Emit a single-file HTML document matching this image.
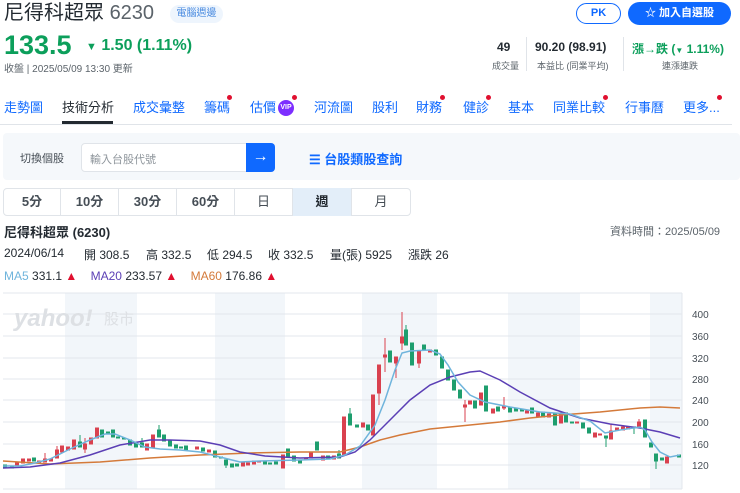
<!DOCTYPE html>
<html><head><meta charset="utf-8"><style>
*{margin:0;padding:0;box-sizing:border-box}
body{width:740px;height:493px;overflow:hidden;background:#fff;font-family:"Liberation Sans","Noto Sans CJK TC",sans-serif;color:#232a31;position:relative}
.a{position:absolute;white-space:nowrap}
.tab{position:absolute;top:99px;font-size:13px;color:#0f69ff;line-height:18px}
.dot{position:absolute;width:5px;height:5px;border-radius:50%;background:#e0102f}
.pb{position:absolute;top:188px;height:28px;border-right:1px solid #e0e4e9;font-size:13px;font-weight:bold;color:#464e56;text-align:center;line-height:28px}
.inf{position:absolute;top:246px;font-size:12px;white-space:nowrap}
</style></head><body>
<div class="a" style="left:4px;top:1px;font-size:20px;line-height:24px;color:#232a31">尼得科超眾 <span style="color:#5b636a">6230</span></div>
<div class="a" style="left:170px;top:5px;height:18px;width:53px;border-radius:9px;background:#eef5fd;color:#4a8be0;font-size:10px;line-height:18px;text-align:center">電腦週邊</div>
<div class="a" style="left:4px;top:29px;font-size:27px;font-weight:bold;color:#0c9f5b;line-height:32px">133.5</div>
<div class="a" style="left:86px;top:37px;font-size:16px;font-weight:bold;color:#0c9f5b;line-height:18px"><span style="font-size:11px">▼</span> 1.50 (1.11%)</div>
<div class="a" style="left:4px;top:60px;font-size:10px;color:#5b636a">收盤 | 2025/05/09 13:30 更新</div>

<div class="a" style="left:576px;top:3px;width:45px;height:21px;border:1.5px solid #0f69ff;border-radius:11px;color:#0f69ff;font-size:11px;font-weight:bold;text-align:center;line-height:18px">PK</div>
<div class="a" style="left:628px;top:2px;width:103px;height:23px;background:#0f69ff;border-radius:12px;color:#fff;font-size:11px;font-weight:bold;text-align:center;line-height:23px">☆ 加入自選股</div>

<div class="a" style="left:497px;top:40px;font-size:12px;font-weight:bold">49</div>
<div class="a" style="left:492px;top:59px;font-size:9px;color:#5b636a">成交量</div>
<div class="a" style="left:526px;top:37px;width:1px;height:34px;background:#e0e4e9"></div>
<div class="a" style="left:535px;top:40px;font-size:12px;font-weight:bold">90.20 (98.91)</div>
<div class="a" style="left:537px;top:59px;font-size:9px;color:#5b636a">本益比 (同業平均)</div>
<div class="a" style="left:623px;top:37px;width:1px;height:34px;background:#e0e4e9"></div>
<div class="a" style="left:632px;top:40px;font-size:12px;font-weight:bold;color:#0c9f5b">漲→跌 (<span style="font-size:8px">▼</span> 1.11%)</div>
<div class="a" style="left:662px;top:59px;font-size:9px;color:#5b636a">連漲連跌</div>

<div class="tab" style="left:4px">走勢圖</div>
<div class="tab" style="left:62px;color:#232a31">技術分析</div>
<div class="a" style="left:62px;top:121px;width:51px;height:3px;background:#232a31"></div>
<div class="tab" style="left:133px">成交彙整</div>
<div class="tab" style="left:204px">籌碼</div><div class="dot" style="left:227px;top:95px"></div>
<div class="tab" style="left:250px">估價</div>
<div class="a" style="left:278px;top:100px;width:16px;height:16px;border-radius:50%;background:#7d2eff;color:#fff;font-size:7px;font-weight:bold;text-align:center;line-height:16px">VIP</div><div class="dot" style="left:292px;top:95px"></div>
<div class="tab" style="left:314px">河流圖</div>
<div class="tab" style="left:372px">股利</div>
<div class="tab" style="left:416px">財務</div><div class="dot" style="left:440px;top:95px"></div>
<div class="tab" style="left:463px">健診</div><div class="dot" style="left:486px;top:95px"></div>
<div class="tab" style="left:508px">基本</div>
<div class="tab" style="left:553px">同業比較</div><div class="dot" style="left:603px;top:95px"></div>
<div class="tab" style="left:625px">行事曆</div>
<div class="tab" style="left:683px">更多...</div><div class="dot" style="left:717px;top:95px"></div>
<div class="a" style="left:0;top:124px;width:732px;height:1px;background:#e0e4e9"></div>

<div class="a" style="left:3px;top:133px;width:737px;height:47px;background:#f5f8fb;border-radius:4px"></div>
<div class="a" style="left:20px;top:150px;font-size:11px;color:#464e56">切換個股</div>
<div class="a" style="left:81px;top:143px;width:194px;height:29px;background:#fff;border:1px solid #e0e4e9;border-radius:4px"></div>
<div class="a" style="left:90px;top:151px;font-size:11px;color:#8f969c">輸入台股代號</div>
<div class="a" style="left:246px;top:143px;width:29px;height:29px;background:#0f69ff;border-radius:0 4px 4px 0;color:#fff;font-size:16px;text-align:center;line-height:28px">→</div>
<div class="a" style="left:309px;top:149px;font-size:13px;color:#0f69ff;font-weight:bold">☰ 台股類股查詢</div>

<div class="a" style="left:3px;top:188px;width:408px;height:28px;border:1px solid #e0e4e9;border-radius:4px"></div>
<div class="pb" style="left:4px;width:57px">5分</div>
<div class="pb" style="left:61px;width:58px">10分</div>
<div class="pb" style="left:119px;width:58px">30分</div>
<div class="pb" style="left:177px;width:58px">60分</div>
<div class="pb" style="left:235px;width:58px;font-weight:normal">日</div>
<div class="pb" style="left:293px;width:59px;background:#e3eef9;color:#232a31">週</div>
<div class="pb" style="left:352px;width:58px;border:none;font-weight:normal">月</div>

<div class="a" style="left:4px;top:222px;font-size:13px;font-weight:bold">尼得科超眾 (6230)</div>
<div class="a" style="left:610px;top:223px;font-size:11px;color:#5b636a">資料時間：2025/05/09</div>
<div class="inf" style="left:4px">2024/06/14</div>
<div class="inf" style="left:84px">開 308.5</div>
<div class="inf" style="left:146px">高 332.5</div>
<div class="inf" style="left:207px">低 294.5</div>
<div class="inf" style="left:268px">收 332.5</div>
<div class="inf" style="left:330px">量(張) 5925</div>
<div class="inf" style="left:408px">漲跌 26</div>
<div class="a" style="left:4px;top:269px;font-size:12px"><span style="color:#6fb4dc">MA5</span> 331.1 <span style="color:#e0102f">▲</span> &nbsp;&nbsp;&nbsp;<span style="color:#5b3fb5">MA20</span> 233.57 <span style="color:#e0102f">▲</span> &nbsp;&nbsp;&nbsp;<span style="color:#d47a3a">MA60</span> 176.86 <span style="color:#e0102f">▲</span></div>

<svg class="a" style="left:0;top:0" width="740" height="493" viewBox="0 0 740 493">
<g fill="#f2f6fa"><rect x="65" y="293" width="72" height="196"/><rect x="215" y="293" width="70" height="196"/><rect x="362" y="293" width="75" height="196"/><rect x="508" y="293" width="72" height="196"/><rect x="650" y="293" width="32" height="196"/></g>
<g stroke="#e3e7ec" stroke-width="1"><line x1="3" y1="293" x2="682" y2="293"/><line x1="3" y1="314" x2="682" y2="314"/><line x1="3" y1="336" x2="682" y2="336"/><line x1="3" y1="358" x2="682" y2="358"/><line x1="3" y1="379" x2="682" y2="379"/><line x1="3" y1="400" x2="682" y2="400"/><line x1="3" y1="422" x2="682" y2="422"/><line x1="3" y1="444" x2="682" y2="444"/><line x1="3" y1="465" x2="682" y2="465"/><line x1="3" y1="489" x2="682" y2="489"/><line x1="682" y1="293" x2="682" y2="489"/></g>
<text x="14" y="326" font-family="Liberation Sans" font-weight="bold" font-style="italic" font-size="24" fill="#dde0e4">yahoo!</text>
<text x="104" y="324" font-family="Noto Sans CJK TC" font-size="15" fill="#dde0e4">股市</text>
<g font-size="10" fill="#464e56" font-family="Liberation Sans"><text x="692" y="318">400</text><text x="692" y="340">360</text><text x="692" y="362">320</text><text x="692" y="383">280</text><text x="692" y="404">240</text><text x="692" y="426">200</text><text x="692" y="448">160</text><text x="692" y="469">120</text></g>
<g id="c" stroke-width="1">
<g fill="#d9414f" stroke="#d9414f">
<rect x="15.5" y="462" width="3" height="4"/><rect x="21.5" y="459" width="3" height="4"/><rect x="27.5" y="459" width="3" height="2"/><rect x="37.5" y="461" width="3" height="2"/><rect x="43.5" y="459" width="3" height="3"/><line x1="45" y1="453" x2="45" y2="459"/><rect x="49.5" y="459" width="3" height="2"/><rect x="55.5" y="450" width="3" height="8"/><line x1="57" y1="446" x2="57" y2="450"/><rect x="60.5" y="446" width="3" height="6"/><rect x="66.5" y="447" width="3" height="3"/><rect x="72.5" y="440" width="3" height="9"/><rect x="83.5" y="444" width="3" height="5"/><line x1="85" y1="438" x2="85" y2="453"/><rect x="89.5" y="438" width="3" height="6"/><rect x="95.5" y="428" width="3" height="10"/><rect x="145.5" y="444" width="3" height="6"/><rect x="151.5" y="435" width="3" height="13"/><rect x="195.5" y="447" width="3" height="2"/><rect x="207.5" y="450" width="3" height="2"/><rect x="241.5" y="463" width="3" height="3"/><rect x="246.5" y="463" width="3" height="2"/><rect x="252.5" y="461" width="3" height="3"/><rect x="257.5" y="461" width="3" height="1"/><rect x="281.5" y="455" width="3" height="13"/><rect x="304.5" y="458" width="3" height="2"/><rect x="309.5" y="453" width="3" height="5"/><rect x="321.5" y="456" width="3" height="4"/><rect x="332.5" y="456" width="3" height="3"/>
<rect x="342.5" y="417" width="3" height="38"/><rect x="361.5" y="423" width="3" height="4"/><rect x="371.5" y="395" width="3" height="40"/><rect x="377.5" y="365" width="3" height="28"/><line x1="379" y1="393" x2="379" y2="405"/><rect x="383.5" y="355" width="3" height="2"/><line x1="385" y1="338" x2="385" y2="372"/><rect x="394.5" y="357" width="3" height="6"/><line x1="396" y1="363" x2="396" y2="378"/><rect x="400.5" y="337" width="3" height="6"/><line x1="402" y1="312" x2="402" y2="350"/><rect x="417.5" y="351" width="3" height="12"/><line x1="419" y1="363" x2="419" y2="368"/><rect x="428.5" y="350" width="3" height="2"/><rect x="463.5" y="405" width="3" height="2"/><line x1="465" y1="400" x2="465" y2="422"/><rect x="468.5" y="401" width="3" height="3"/><rect x="479.5" y="393" width="3" height="12"/>
<rect x="491.5" y="409" width="3" height="4"/><rect x="502.5" y="406" width="3" height="2"/><line x1="504" y1="397" x2="504" y2="410"/><rect x="525.5" y="411" width="3" height="2"/><rect x="536.5" y="413" width="3" height="4"/><rect x="547.5" y="414" width="3" height="3"/><rect x="559.5" y="413" width="3" height="10"/><rect x="575.5" y="422" width="3" height="1"/><rect x="593.5" y="433" width="3" height="4"/><rect x="598.5" y="434" width="3" height="1"/><rect x="609.5" y="431" width="3" height="8"/><line x1="611" y1="424" x2="611" y2="431"/><rect x="615.5" y="428" width="3" height="2"/><rect x="621.5" y="427" width="3" height="3"/><rect x="626.5" y="427" width="3" height="2"/><rect x="637.5" y="422" width="3" height="5"/><line x1="639" y1="419" x2="639" y2="422"/><rect x="665.5" y="457" width="3" height="6"/>
</g>
<g fill="#1e9e6e" stroke="#1e9e6e">
<rect x="3.5" y="465" width="3" height="3"/><rect x="10.5" y="466" width="3" height="2"/><rect x="32.5" y="458" width="3" height="3"/><rect x="78.5" y="442" width="3" height="5"/><line x1="80" y1="435" x2="80" y2="442"/><rect x="100.5" y="430" width="3" height="7"/><rect x="106.5" y="432" width="3" height="2"/><rect x="111.5" y="430" width="3" height="7"/><rect x="116.5" y="437" width="3" height="1"/><rect x="122.5" y="438" width="3" height="1"/><rect x="128.5" y="440" width="3" height="5"/><rect x="134.5" y="443" width="3" height="4"/><rect x="140.5" y="443" width="3" height="4"/><line x1="142" y1="438" x2="142" y2="443"/><rect x="157.5" y="430" width="3" height="7"/><line x1="159" y1="425" x2="159" y2="430"/><rect x="162.5" y="435" width="3" height="6"/><rect x="168.5" y="440" width="3" height="6"/><rect x="174.5" y="445" width="3" height="3"/><rect x="179.5" y="447" width="3" height="1"/><rect x="184.5" y="446" width="3" height="4"/><rect x="201.5" y="448" width="3" height="3"/><rect x="213.5" y="451" width="3" height="6"/><rect x="219.5" y="457" width="3" height="1"/><rect x="224.5" y="460" width="3" height="5"/><line x1="226" y1="465" x2="226" y2="468"/><rect x="230.5" y="464" width="3" height="3"/><rect x="235.5" y="464" width="3" height="2"/><rect x="263.5" y="461" width="3" height="3"/><rect x="268.5" y="463" width="3" height="1"/><rect x="274.5" y="462" width="3" height="2"/><rect x="286.5" y="449" width="3" height="8"/><rect x="292.5" y="456" width="3" height="5"/><rect x="298.5" y="461" width="3" height="2"/><rect x="315.5" y="442" width="3" height="8"/><rect x="326.5" y="456" width="3" height="2"/><rect x="337.5" y="454" width="3" height="4"/><line x1="339" y1="450" x2="339" y2="454"/>
<rect x="348.5" y="414" width="3" height="11"/><line x1="350" y1="408" x2="350" y2="414"/><rect x="355.5" y="425" width="3" height="2"/><rect x="366.5" y="425" width="3" height="5"/><rect x="388.5" y="351" width="3" height="11"/><rect x="404.5" y="330" width="3" height="15"/><line x1="406" y1="325" x2="406" y2="330"/><rect x="410.5" y="343" width="3" height="22"/><rect x="422.5" y="345" width="3" height="5"/><rect x="434.5" y="350" width="3" height="5"/><rect x="440.5" y="357" width="3" height="11"/><rect x="446.5" y="370" width="3" height="10"/><rect x="452.5" y="380" width="3" height="10"/><rect x="458.5" y="390" width="3" height="8"/><rect x="473.5" y="401" width="3" height="7"/><rect x="484.5" y="386" width="3" height="25"/>
<rect x="496.5" y="407" width="3" height="4"/><rect x="508.5" y="408" width="3" height="4"/><rect x="514.5" y="408" width="3" height="3"/><rect x="520.5" y="409" width="3" height="2"/><rect x="530.5" y="408" width="3" height="5"/><rect x="541.5" y="412" width="3" height="5"/><rect x="553.5" y="413" width="3" height="12"/><rect x="564.5" y="413" width="3" height="9"/><rect x="570.5" y="422" width="3" height="1"/><rect x="581.5" y="423" width="3" height="5"/><rect x="587.5" y="428" width="3" height="5"/><rect x="604.5" y="436" width="3" height="2"/><line x1="606" y1="438" x2="606" y2="447"/><rect x="632.5" y="427" width="3" height="1"/><line x1="634" y1="428" x2="634" y2="434"/><rect x="643.5" y="420" width="3" height="17"/><rect x="649.5" y="443" width="3" height="4"/><rect x="654.5" y="454" width="3" height="7"/><line x1="656" y1="461" x2="656" y2="469"/><rect x="660.5" y="458" width="3" height="2"/><rect x="677.5" y="455" width="3" height="2"/>
</g></g>
<polyline fill="none" stroke="#d47a3a" stroke-width="1.5" points="3,461 50,464 100,462 150,458 200,455 250,453 300,452 340,452 360,447 380,440 400,435 430,429 460,426 500,422 530,418 560,415 600,412 640,408 660,407 680,408"/>
<polyline fill="none" stroke="#5b3fb5" stroke-width="1.5" points="3,468 30,467 60,463 90,455 120,445 150,440 170,440 200,441 220,445 240,452 265,456 300,458 340,457 355,452 370,440 390,420 410,400 430,385 450,377 470,372 480,371 500,380 520,392 550,408 580,418 610,424 640,428 660,432 680,438"/>
<polyline fill="none" stroke="#6fb4dc" stroke-width="1.5" points="3,466 20,466 35,463 50,459 70,449 90,440 105,434 115,434 130,440 145,447 160,449 180,450 200,452 220,457 240,462 260,461 300,460 330,459 345,455 360,446 375,425 385,400 395,370 402,353 410,351 430,350 440,354 448,365 458,382 470,395 485,402 510,407 540,412 570,414 590,421 605,433 620,430 640,427 645,430 652,442 660,452 670,457 680,455"/>
</svg>
</body></html>
